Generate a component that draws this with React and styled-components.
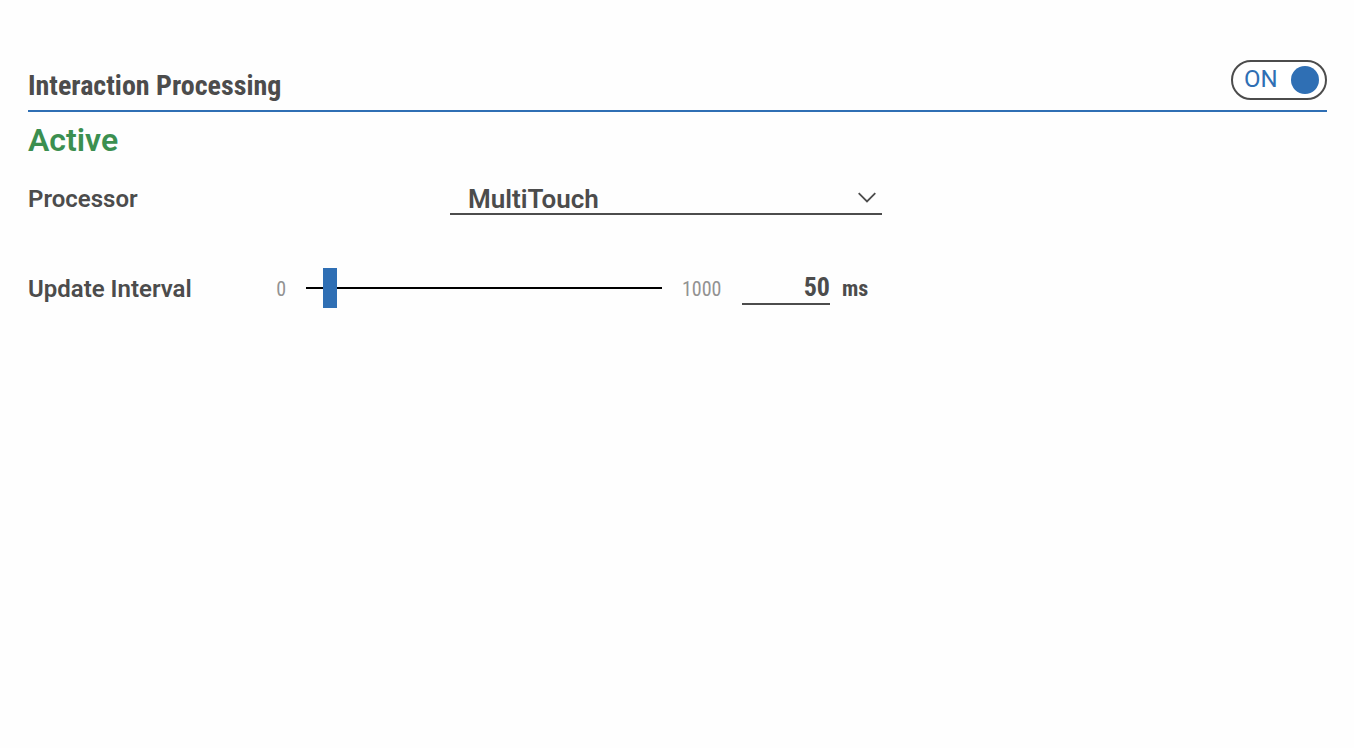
import React, { useState } from "react";
import styled, { createGlobalStyle } from "styled-components";

const ink = "#4c4c4c";
const blue = "#2f6fb4";
const sans = `Roboto, "Liberation Sans", sans-serif`;
const narrow = `"Roboto Condensed", "Arial Narrow", Roboto, sans-serif`;

const GlobalStyle = createGlobalStyle`
  *, *::before, *::after { box-sizing: border-box; }
  body {
    margin: 0;
    background: #fefefe;
    color: ${ink};
    font-family: ${sans};
  }
`;

const Page = styled.main`
  padding: 60px 27px 28px 28px;
`;

const Header = styled.header`
  display: flex;
  justify-content: space-between;
  align-items: flex-start;
  height: 52px;
  border-bottom: 2px solid ${blue};
`;

const Title = styled.h1`
  margin: 0;
  padding-top: 6px;
  font: 700 28px/40px ${narrow};
  white-space: nowrap;
`;

const Switch = styled.label`
  display: flex;
  align-items: center;
  justify-content: space-between;
  width: 96px;
  height: 40px;
  padding: 0 6px 0 11px;
  border: 2px solid ${ink};
  border-radius: 20px;
  background: #fff;
  color: ${blue};
  font: 400 24px/32px ${sans};
  cursor: pointer;
`;

const SwitchText = styled.span`
  padding-bottom: 2px;
`;

const SwitchInput = styled.input`
  appearance: none;
  width: 28px;
  height: 28px;
  margin: 0;
  border-radius: 50%;
  background: ${(p) => (p.checked ? blue : "#929292")};
  cursor: pointer;
`;

const Status = styled.p`
  margin: 0;
  padding: 8px 0;
  color: #3b8f50;
  font: 600 32px/40px ${sans};
`;

const Row = styled.div`
  display: flex;
  align-items: center;
  height: ${(p) => p.$height};
`;

const Label = styled.label`
  flex: none;
  width: ${(p) => p.$width};
  padding-top: 2px;
  font: 600 24px/32px ${sans};
`;

const SelectBox = styled.div`
  position: relative;
  width: 432px;
`;

const Select = styled.select`
  appearance: none;
  display: block;
  width: 100%;
  height: 34px;
  padding: 2px 40px 0 18px;
  border: 0;
  border-bottom: 2px solid ${ink};
  border-radius: 0;
  background: transparent;
  color: ${ink};
  font: 600 26px/32px ${sans};
`;

const Chevron = styled.svg`
  position: absolute;
  right: 6px;
  top: 10px;
  pointer-events: none;
`;

const Bound = styled.span`
  flex: none;
  width: ${(p) => p.$width};
  padding-top: 2px;
  text-align: ${(p) => p.$align};
  color: #929292;
  font: 400 20px/32px ${narrow};
`;

const Slider = styled.input`
  appearance: none;
  width: 356px;
  height: 40px;
  margin: 0 20px;
  background: linear-gradient(#000, #000) center / 100% 2px no-repeat;

  &::-webkit-slider-thumb {
    appearance: none;
    width: 14px;
    height: 40px;
    border: 0;
    border-radius: 0;
    background: ${blue};
  }
  &::-moz-range-thumb {
    width: 14px;
    height: 40px;
    border: 0;
    border-radius: 0;
    background: ${blue};
  }
`;

const NumberField = styled.input`
  width: 88px;
  height: 34px;
  padding: 0;
  border: 0;
  border-bottom: 2px solid ${ink};
  border-radius: 0;
  background: transparent;
  color: ${ink};
  font: 700 26px/32px ${narrow};
  text-align: right;
`;

const Unit = styled.span`
  margin-left: 12px;
  padding-top: 2px;
  font: 700 22px/32px ${narrow};
`;

export default function App() {
  const [on, setOn] = useState(true);
  const [interval, setUpdateInterval] = useState("50");

  return (
    <>
      <GlobalStyle />
      <Page>
        <Header>
          <Title>Interaction Processing</Title>
          <Switch>
            <SwitchText>{on ? "ON" : "OFF"}</SwitchText>
            <SwitchInput
              type="checkbox"
              role="switch"
              checked={on}
              onChange={(e) => setOn(e.target.checked)}
            />
          </Switch>
        </Header>
        <Status>{on ? "Active" : "Inactive"}</Status>
        <Row $height="60px">
          <Label htmlFor="processor" $width="422px">Processor</Label>
          <SelectBox>
            <Select id="processor" defaultValue="MultiTouch">
              <option>MultiTouch</option>
            </Select>
            <Chevron width="20" height="14" viewBox="0 0 20 14" fill="none" aria-hidden="true">
              <path d="M2.7 2.2L11 10.5L19.3 2.2" stroke={ink} strokeWidth="1.8" />
            </Chevron>
          </SelectBox>
        </Row>
        <Row $height="120px">
          <Label htmlFor="interval" $width="218px">Update Interval</Label>
          <Bound $width="40px" $align="right">0</Bound>
          <Slider
            type="range"
            min="0"
            max="1000"
            aria-label="Update Interval slider"
            value={Number(interval) || 0}
            onChange={(e) => setUpdateInterval(e.target.value)}
          />
          <Bound $width="60px" $align="left">1000</Bound>
          <NumberField
            id="interval"
            type="text"
            inputMode="numeric"
            value={interval}
            onChange={(e) => setUpdateInterval(e.target.value)}
          />
          <Unit>ms</Unit>
        </Row>
      </Page>
    </>
  );
}
